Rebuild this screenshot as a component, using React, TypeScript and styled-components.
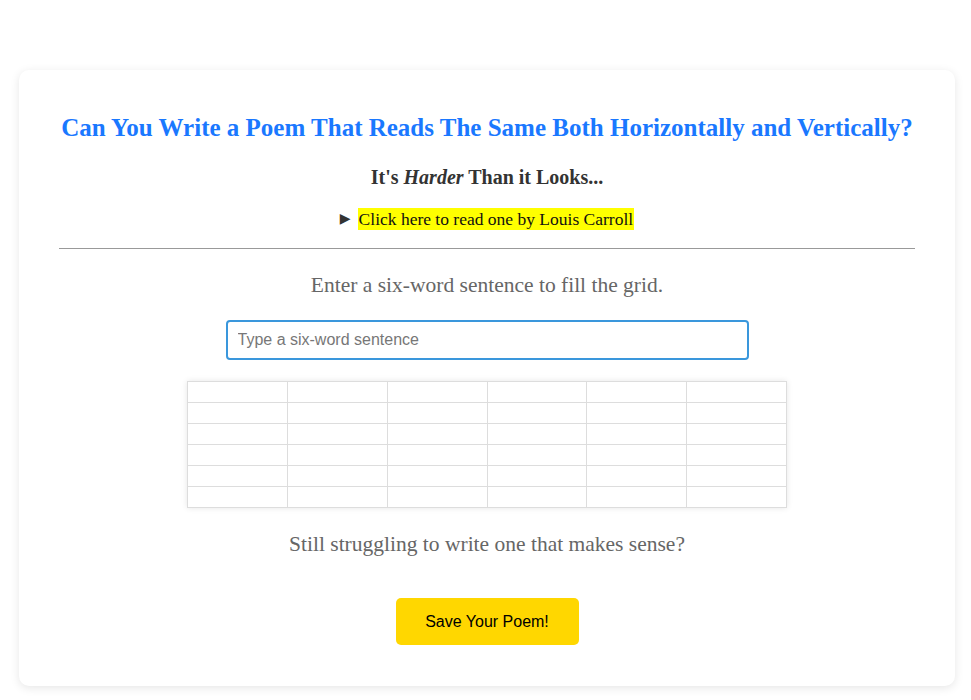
import React from "react";
import styled, { createGlobalStyle } from "styled-components";

const Global = createGlobalStyle`
  html, body { margin: 0; padding: 0; background: #ffffff; }
  body { font-family: "Liberation Serif", "DejaVu Serif", serif; }
`;

const Page = styled.div`
  display: flex;
  justify-content: center;
  padding: 70px 16px 14px 19px;
`;

const Card = styled.main`
  width: 936px;
  box-sizing: border-box;
  background: #fff;
  border-radius: 10px;
  box-shadow: 0 2px 10px rgba(0, 0, 0, 0.1);
  padding: 42px 40px 41px;
  display: flex;
  flex-direction: column;
  align-items: center;
  text-align: center;
`;

const Title = styled.h1`
  margin: 0;
  font-family: "Liberation Serif", serif;
  font-weight: 700;
  font-size: 25px;
  line-height: 32px;
  white-space: nowrap;
  color: #1a78ff;
`;

const Subtitle = styled.h2`
  margin: 19px 0 0;
  font-family: "Liberation Serif", serif;
  font-weight: 700;
  font-size: 20px;
  line-height: 28px;
  color: #333;
  em { font-style: italic; }
`;

const Details = styled.details`
  margin-top: 17px;
  font-size: 17.5px;
  line-height: 22px;
  color: #111;
`;

const Summary = styled.summary`
  cursor: pointer;
  list-style: none;
  display: flex;
  align-items: center;
  gap: 7px;
  &::-webkit-details-marker { display: none; }
`;

const Arrow = styled.span`
  font-size: 14px;
  color: #333;
`;

const Mark = styled.mark`
  background: #ffff00;
  color: #111;
  padding: 0 1px;
`;

const Rule = styled.hr`
  align-self: stretch;
  margin: 18px 0 0;
  border: none;
  border-top: 1px solid #999;
`;

const Prompt = styled.p`
  margin: 23px 0 0;
  font-size: 21.5px;
  line-height: 26px;
  color: #666;
`;

const Input = styled.input`
  margin-top: 22px;
  width: 523px;
  height: 40px;
  box-sizing: border-box;
  border: 2px solid #3a97dc;
  border-radius: 4px;
  padding: 0 10px;
  font-family: "Liberation Sans", Arial, sans-serif;
  font-size: 16px;
  color: #333;
  outline: none;
  &::placeholder { color: #777; }
`;

const Grid = styled.div`
  margin-top: 21px;
  width: 600px;
  box-sizing: border-box;
  display: grid;
  grid-template-columns: repeat(6, 1fr);
  border: 1px solid #ddd;
  border-right: none;
  border-bottom: none;
  box-shadow: 0 0 6px rgba(0, 0, 0, 0.1);
`;

const Cell = styled.div`
  height: 20px;
  border-right: 1px solid #ddd;
  border-bottom: 1px solid #ddd;
  background: #fff;
`;

const Struggle = styled.p`
  margin: 23px 0 0;
  font-size: 21.5px;
  line-height: 26px;
  color: #666;
`;

const SaveButton = styled.button`
  margin-top: 41px;
  width: 183px;
  height: 47px;
  border: none;
  border-radius: 5px;
  background: #ffd700;
  color: #000;
  font-family: "Liberation Sans", Arial, sans-serif;
  font-size: 16px;
  cursor: pointer;
`;

export default function App() {
  const cells = Array.from({ length: 36 });
  return (
    <>
      <Global />
      <Page>
        <Card>
          <Title>Can You Write a Poem That Reads The Same Both Horizontally and Vertically?</Title>
          <Subtitle>
            It's <em>Harder</em> Than it Looks...
          </Subtitle>
          <Details>
            <Summary>
              <Arrow>▶</Arrow>
              <Mark>Click here to read one by Louis Carroll</Mark>
            </Summary>
          </Details>
          <Rule />
          <Prompt>Enter a six-word sentence to fill the grid.</Prompt>
          <Input placeholder="Type a six-word sentence" />
          <Grid>
            {cells.map((_, i) => (
              <Cell key={i} />
            ))}
          </Grid>
          <Struggle>Still struggling to write one that makes sense?</Struggle>
          <SaveButton>Save Your Poem!</SaveButton>
        </Card>
      </Page>
    </>
  );
}
